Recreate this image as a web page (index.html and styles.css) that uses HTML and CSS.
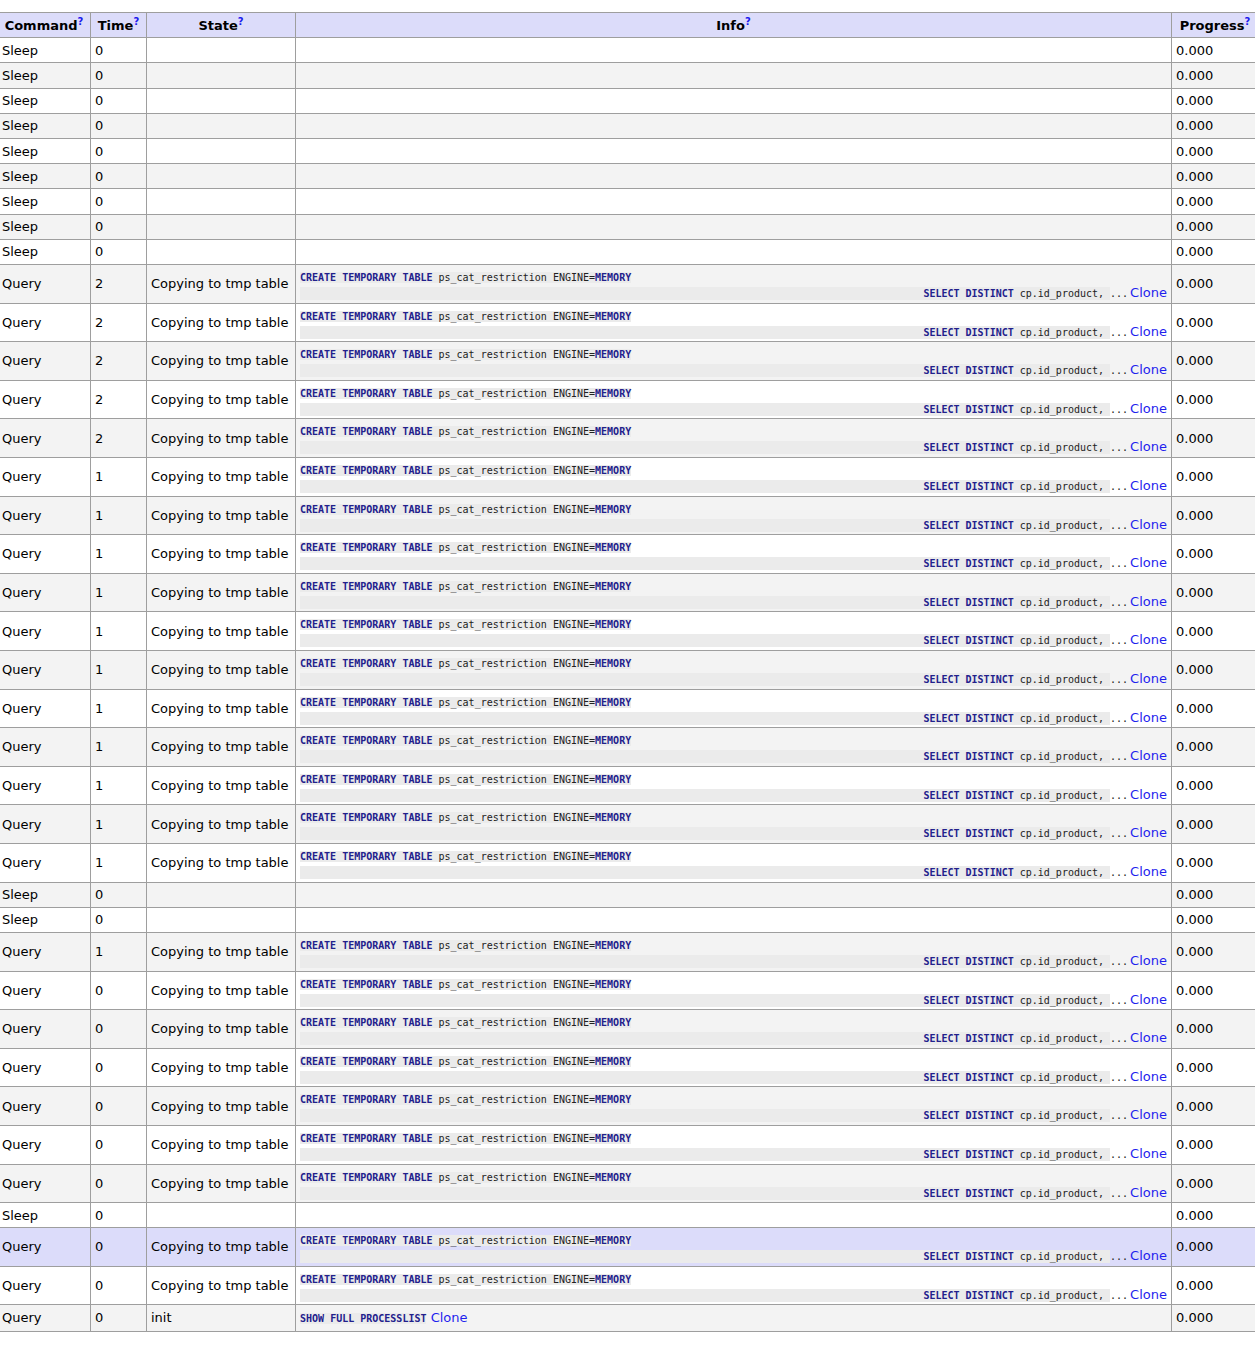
FILE: index.html
```html
<!DOCTYPE html>
<html>
<head>
<meta charset="utf-8">
<title>Processes</title>
<link rel="stylesheet" href="styles.css">
</head>
<body>
<table class="plist">
<colgroup><col class="c-cmd"><col class="c-time"><col class="c-state"><col class="c-info"><col class="c-prog"></colgroup>
<thead>
<tr><th>Command<sup><a href="#">?</a></sup></th><th>Time<sup><a href="#">?</a></sup></th><th>State<sup><a href="#">?</a></sup></th><th>Info<sup><a href="#">?</a></sup></th><th>Progress<sup><a href="#">?</a></sup></th></tr>
</thead>
<tbody>
<tr><td>Sleep</td><td>0</td><td></td><td></td><td>0.000</td></tr>
<tr><td>Sleep</td><td>0</td><td></td><td></td><td>0.000</td></tr>
<tr><td>Sleep</td><td>0</td><td></td><td></td><td>0.000</td></tr>
<tr><td>Sleep</td><td>0</td><td></td><td></td><td>0.000</td></tr>
<tr><td>Sleep</td><td>0</td><td></td><td></td><td>0.000</td></tr>
<tr><td>Sleep</td><td>0</td><td></td><td></td><td>0.000</td></tr>
<tr><td>Sleep</td><td>0</td><td></td><td></td><td>0.000</td></tr>
<tr><td>Sleep</td><td>0</td><td></td><td></td><td>0.000</td></tr>
<tr><td>Sleep</td><td>0</td><td></td><td></td><td>0.000</td></tr>
<tr><td>Query</td><td>2</td><td>Copying to tmp table</td><td class="info"><div class="sql1"><code class="hl"><b>CREATE</b> <b>TEMPORARY</b> <b>TABLE</b> ps_cat_restriction ENGINE=<b>MEMORY</b></code></div><div class="sql2"><code class="tail"><b>SELECT</b> <b>DISTINCT</b> cp.id_product, </code><code class="more">...</code><a class="clone" href="#">Clone</a></div></td><td>0.000</td></tr>
<tr><td>Query</td><td>2</td><td>Copying to tmp table</td><td class="info"><div class="sql1"><code class="hl"><b>CREATE</b> <b>TEMPORARY</b> <b>TABLE</b> ps_cat_restriction ENGINE=<b>MEMORY</b></code></div><div class="sql2"><code class="tail"><b>SELECT</b> <b>DISTINCT</b> cp.id_product, </code><code class="more">...</code><a class="clone" href="#">Clone</a></div></td><td>0.000</td></tr>
<tr><td>Query</td><td>2</td><td>Copying to tmp table</td><td class="info"><div class="sql1"><code class="hl"><b>CREATE</b> <b>TEMPORARY</b> <b>TABLE</b> ps_cat_restriction ENGINE=<b>MEMORY</b></code></div><div class="sql2"><code class="tail"><b>SELECT</b> <b>DISTINCT</b> cp.id_product, </code><code class="more">...</code><a class="clone" href="#">Clone</a></div></td><td>0.000</td></tr>
<tr><td>Query</td><td>2</td><td>Copying to tmp table</td><td class="info"><div class="sql1"><code class="hl"><b>CREATE</b> <b>TEMPORARY</b> <b>TABLE</b> ps_cat_restriction ENGINE=<b>MEMORY</b></code></div><div class="sql2"><code class="tail"><b>SELECT</b> <b>DISTINCT</b> cp.id_product, </code><code class="more">...</code><a class="clone" href="#">Clone</a></div></td><td>0.000</td></tr>
<tr><td>Query</td><td>2</td><td>Copying to tmp table</td><td class="info"><div class="sql1"><code class="hl"><b>CREATE</b> <b>TEMPORARY</b> <b>TABLE</b> ps_cat_restriction ENGINE=<b>MEMORY</b></code></div><div class="sql2"><code class="tail"><b>SELECT</b> <b>DISTINCT</b> cp.id_product, </code><code class="more">...</code><a class="clone" href="#">Clone</a></div></td><td>0.000</td></tr>
<tr><td>Query</td><td>1</td><td>Copying to tmp table</td><td class="info"><div class="sql1"><code class="hl"><b>CREATE</b> <b>TEMPORARY</b> <b>TABLE</b> ps_cat_restriction ENGINE=<b>MEMORY</b></code></div><div class="sql2"><code class="tail"><b>SELECT</b> <b>DISTINCT</b> cp.id_product, </code><code class="more">...</code><a class="clone" href="#">Clone</a></div></td><td>0.000</td></tr>
<tr><td>Query</td><td>1</td><td>Copying to tmp table</td><td class="info"><div class="sql1"><code class="hl"><b>CREATE</b> <b>TEMPORARY</b> <b>TABLE</b> ps_cat_restriction ENGINE=<b>MEMORY</b></code></div><div class="sql2"><code class="tail"><b>SELECT</b> <b>DISTINCT</b> cp.id_product, </code><code class="more">...</code><a class="clone" href="#">Clone</a></div></td><td>0.000</td></tr>
<tr><td>Query</td><td>1</td><td>Copying to tmp table</td><td class="info"><div class="sql1"><code class="hl"><b>CREATE</b> <b>TEMPORARY</b> <b>TABLE</b> ps_cat_restriction ENGINE=<b>MEMORY</b></code></div><div class="sql2"><code class="tail"><b>SELECT</b> <b>DISTINCT</b> cp.id_product, </code><code class="more">...</code><a class="clone" href="#">Clone</a></div></td><td>0.000</td></tr>
<tr><td>Query</td><td>1</td><td>Copying to tmp table</td><td class="info"><div class="sql1"><code class="hl"><b>CREATE</b> <b>TEMPORARY</b> <b>TABLE</b> ps_cat_restriction ENGINE=<b>MEMORY</b></code></div><div class="sql2"><code class="tail"><b>SELECT</b> <b>DISTINCT</b> cp.id_product, </code><code class="more">...</code><a class="clone" href="#">Clone</a></div></td><td>0.000</td></tr>
<tr><td>Query</td><td>1</td><td>Copying to tmp table</td><td class="info"><div class="sql1"><code class="hl"><b>CREATE</b> <b>TEMPORARY</b> <b>TABLE</b> ps_cat_restriction ENGINE=<b>MEMORY</b></code></div><div class="sql2"><code class="tail"><b>SELECT</b> <b>DISTINCT</b> cp.id_product, </code><code class="more">...</code><a class="clone" href="#">Clone</a></div></td><td>0.000</td></tr>
<tr><td>Query</td><td>1</td><td>Copying to tmp table</td><td class="info"><div class="sql1"><code class="hl"><b>CREATE</b> <b>TEMPORARY</b> <b>TABLE</b> ps_cat_restriction ENGINE=<b>MEMORY</b></code></div><div class="sql2"><code class="tail"><b>SELECT</b> <b>DISTINCT</b> cp.id_product, </code><code class="more">...</code><a class="clone" href="#">Clone</a></div></td><td>0.000</td></tr>
<tr><td>Query</td><td>1</td><td>Copying to tmp table</td><td class="info"><div class="sql1"><code class="hl"><b>CREATE</b> <b>TEMPORARY</b> <b>TABLE</b> ps_cat_restriction ENGINE=<b>MEMORY</b></code></div><div class="sql2"><code class="tail"><b>SELECT</b> <b>DISTINCT</b> cp.id_product, </code><code class="more">...</code><a class="clone" href="#">Clone</a></div></td><td>0.000</td></tr>
<tr><td>Query</td><td>1</td><td>Copying to tmp table</td><td class="info"><div class="sql1"><code class="hl"><b>CREATE</b> <b>TEMPORARY</b> <b>TABLE</b> ps_cat_restriction ENGINE=<b>MEMORY</b></code></div><div class="sql2"><code class="tail"><b>SELECT</b> <b>DISTINCT</b> cp.id_product, </code><code class="more">...</code><a class="clone" href="#">Clone</a></div></td><td>0.000</td></tr>
<tr><td>Query</td><td>1</td><td>Copying to tmp table</td><td class="info"><div class="sql1"><code class="hl"><b>CREATE</b> <b>TEMPORARY</b> <b>TABLE</b> ps_cat_restriction ENGINE=<b>MEMORY</b></code></div><div class="sql2"><code class="tail"><b>SELECT</b> <b>DISTINCT</b> cp.id_product, </code><code class="more">...</code><a class="clone" href="#">Clone</a></div></td><td>0.000</td></tr>
<tr><td>Query</td><td>1</td><td>Copying to tmp table</td><td class="info"><div class="sql1"><code class="hl"><b>CREATE</b> <b>TEMPORARY</b> <b>TABLE</b> ps_cat_restriction ENGINE=<b>MEMORY</b></code></div><div class="sql2"><code class="tail"><b>SELECT</b> <b>DISTINCT</b> cp.id_product, </code><code class="more">...</code><a class="clone" href="#">Clone</a></div></td><td>0.000</td></tr>
<tr><td>Query</td><td>1</td><td>Copying to tmp table</td><td class="info"><div class="sql1"><code class="hl"><b>CREATE</b> <b>TEMPORARY</b> <b>TABLE</b> ps_cat_restriction ENGINE=<b>MEMORY</b></code></div><div class="sql2"><code class="tail"><b>SELECT</b> <b>DISTINCT</b> cp.id_product, </code><code class="more">...</code><a class="clone" href="#">Clone</a></div></td><td>0.000</td></tr>
<tr><td>Sleep</td><td>0</td><td></td><td></td><td>0.000</td></tr>
<tr><td>Sleep</td><td>0</td><td></td><td></td><td>0.000</td></tr>
<tr><td>Query</td><td>1</td><td>Copying to tmp table</td><td class="info"><div class="sql1"><code class="hl"><b>CREATE</b> <b>TEMPORARY</b> <b>TABLE</b> ps_cat_restriction ENGINE=<b>MEMORY</b></code></div><div class="sql2"><code class="tail"><b>SELECT</b> <b>DISTINCT</b> cp.id_product, </code><code class="more">...</code><a class="clone" href="#">Clone</a></div></td><td>0.000</td></tr>
<tr><td>Query</td><td>0</td><td>Copying to tmp table</td><td class="info"><div class="sql1"><code class="hl"><b>CREATE</b> <b>TEMPORARY</b> <b>TABLE</b> ps_cat_restriction ENGINE=<b>MEMORY</b></code></div><div class="sql2"><code class="tail"><b>SELECT</b> <b>DISTINCT</b> cp.id_product, </code><code class="more">...</code><a class="clone" href="#">Clone</a></div></td><td>0.000</td></tr>
<tr><td>Query</td><td>0</td><td>Copying to tmp table</td><td class="info"><div class="sql1"><code class="hl"><b>CREATE</b> <b>TEMPORARY</b> <b>TABLE</b> ps_cat_restriction ENGINE=<b>MEMORY</b></code></div><div class="sql2"><code class="tail"><b>SELECT</b> <b>DISTINCT</b> cp.id_product, </code><code class="more">...</code><a class="clone" href="#">Clone</a></div></td><td>0.000</td></tr>
<tr><td>Query</td><td>0</td><td>Copying to tmp table</td><td class="info"><div class="sql1"><code class="hl"><b>CREATE</b> <b>TEMPORARY</b> <b>TABLE</b> ps_cat_restriction ENGINE=<b>MEMORY</b></code></div><div class="sql2"><code class="tail"><b>SELECT</b> <b>DISTINCT</b> cp.id_product, </code><code class="more">...</code><a class="clone" href="#">Clone</a></div></td><td>0.000</td></tr>
<tr><td>Query</td><td>0</td><td>Copying to tmp table</td><td class="info"><div class="sql1"><code class="hl"><b>CREATE</b> <b>TEMPORARY</b> <b>TABLE</b> ps_cat_restriction ENGINE=<b>MEMORY</b></code></div><div class="sql2"><code class="tail"><b>SELECT</b> <b>DISTINCT</b> cp.id_product, </code><code class="more">...</code><a class="clone" href="#">Clone</a></div></td><td>0.000</td></tr>
<tr><td>Query</td><td>0</td><td>Copying to tmp table</td><td class="info"><div class="sql1"><code class="hl"><b>CREATE</b> <b>TEMPORARY</b> <b>TABLE</b> ps_cat_restriction ENGINE=<b>MEMORY</b></code></div><div class="sql2"><code class="tail"><b>SELECT</b> <b>DISTINCT</b> cp.id_product, </code><code class="more">...</code><a class="clone" href="#">Clone</a></div></td><td>0.000</td></tr>
<tr><td>Query</td><td>0</td><td>Copying to tmp table</td><td class="info"><div class="sql1"><code class="hl"><b>CREATE</b> <b>TEMPORARY</b> <b>TABLE</b> ps_cat_restriction ENGINE=<b>MEMORY</b></code></div><div class="sql2"><code class="tail"><b>SELECT</b> <b>DISTINCT</b> cp.id_product, </code><code class="more">...</code><a class="clone" href="#">Clone</a></div></td><td>0.000</td></tr>
<tr><td>Sleep</td><td>0</td><td></td><td></td><td>0.000</td></tr>
<tr class="marked"><td>Query</td><td>0</td><td>Copying to tmp table</td><td class="info"><div class="sql1"><code class="hl"><b>CREATE</b> <b>TEMPORARY</b> <b>TABLE</b> ps_cat_restriction ENGINE=<b>MEMORY</b></code></div><div class="sql2"><code class="tail"><b>SELECT</b> <b>DISTINCT</b> cp.id_product, </code><code class="more">...</code><a class="clone" href="#">Clone</a></div></td><td>0.000</td></tr>
<tr><td>Query</td><td>0</td><td>Copying to tmp table</td><td class="info"><div class="sql1"><code class="hl"><b>CREATE</b> <b>TEMPORARY</b> <b>TABLE</b> ps_cat_restriction ENGINE=<b>MEMORY</b></code></div><div class="sql2"><code class="tail"><b>SELECT</b> <b>DISTINCT</b> cp.id_product, </code><code class="more">...</code><a class="clone" href="#">Clone</a></div></td><td>0.000</td></tr>
<tr><td>Query</td><td>0</td><td>init</td><td class="info-one"><code class="hl"><b>SHOW</b> <b>FULL</b> <b>PROCESSLIST</b></code> <a class="clone" href="#">Clone</a></td><td>0.000</td></tr>
</tbody>
</table>
</body>
</html>
```

FILE: styles.css
```css
html, body {
  margin: 0;
  padding: 0;
  overflow: hidden;
  background: #ffffff;
}

body {
  font-family: "DejaVu Sans", Verdana, sans-serif;
  font-size: 13px;
  color: #000000;
}

.plist {
  border-collapse: collapse;
  table-layout: fixed;
  width: 1261px;
  margin: 12px 0 0 -3px;
}

.c-cmd { width: 93px; }
.c-time { width: 56px; }
.c-state { width: 149px; }
.c-info { width: 876px; }
.c-prog { width: 87px; }

.plist th,
.plist td {
  border: 1px solid #9e9e9e;
  padding: 4.5px 4px;
  line-height: 15.2px;
  vertical-align: middle;
  text-align: left;
  white-space: nowrap;
  overflow: hidden;
}

.plist th {
  background: #dcdcfa;
  font-weight: bold;
  text-align: center;
  padding: 4.5px 6px;
}

.plist sup {
  font-size: 10px;
  line-height: 0;
  vertical-align: 5px;
}

.plist sup a {
  color: #1a1aee;
  text-decoration: none;
  font-weight: bold;
}

.plist tbody tr:nth-child(odd) { background: #ffffff; }
.plist tbody tr:nth-child(even) { background: #f3f3f3; }
.plist tbody tr.marked { background: #dcdcfa; }

.plist td.info {
  padding: 2px 4px 3.6px 4px;
  line-height: normal;
}

.plist td.info-one {
  padding: 4.5px 4px;
}

code {
  font-family: "DejaVu Sans Mono", "Liberation Mono", monospace;
  font-size: 10px;
  color: #222222;
}

code b {
  color: #22208c;
  font-weight: bold;
}

.hl {
  background: #ebebeb;
}

.sql1 {
  height: 19px;
  line-height: 19px;
}

.sql2 {
  display: flex;
  align-items: baseline;
  height: 13px;
  line-height: 13px;
}

.sql2 .tail {
  flex: 1;
  background: #ebebeb;
  text-align: right;
  white-space: pre;
}

.sql2 .more {
  white-space: pre;
  padding-right: 2px;
}

.clone {
  font-family: "DejaVu Sans", Verdana, sans-serif;
  font-size: 13px;
  color: #1f1fee;
  text-decoration: none;
}
```
